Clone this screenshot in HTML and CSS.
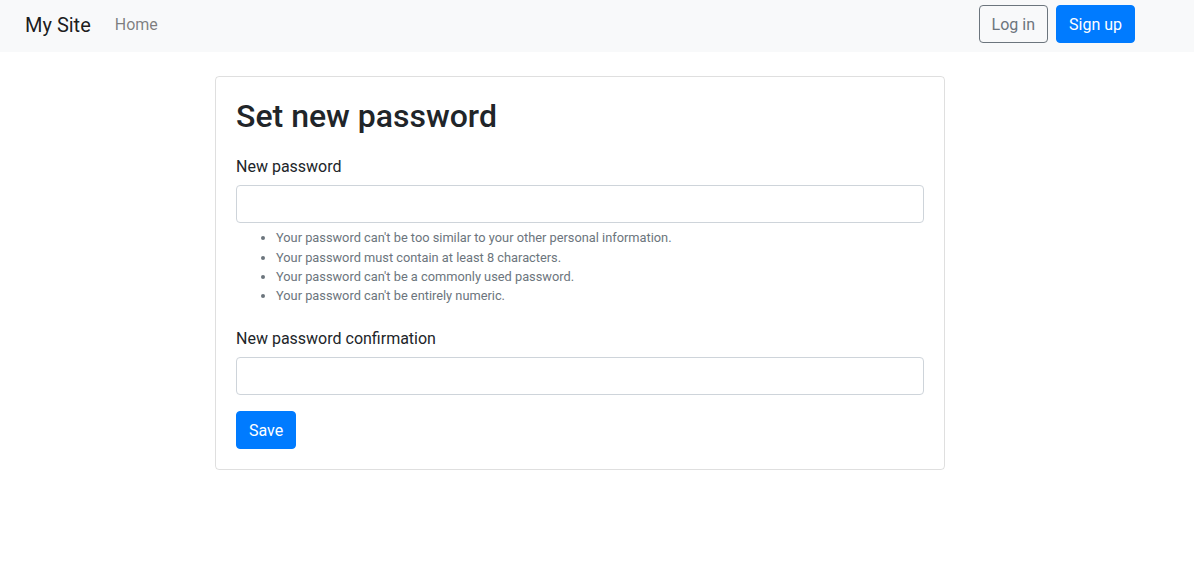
FILE: index.html
```html
<!DOCTYPE html>
<html lang="en">
<head>
<meta charset="utf-8">
<title>Set new password</title>
<link rel="stylesheet" href="styles.css">
</head>
<body>
<nav class="navbar">
  <a class="brand" href="#">My Site</a>
  <a class="nav-link" href="#">Home</a>
  <div class="nav-actions">
    <a class="btn btn-outline" href="#">Log in</a>
    <a class="btn btn-primary" href="#">Sign up</a>
  </div>
</nav>
<main class="main">
  <div class="card">
    <h1 class="title">Set new password</h1>
    <form class="form">
      <div class="form-group">
        <label class="label" for="p1">New password</label>
        <input class="input" id="p1" type="password">
        <ul class="help">
          <li>Your password can't be too similar to your other personal information.</li>
          <li>Your password must contain at least 8 characters.</li>
          <li>Your password can't be a commonly used password.</li>
          <li>Your password can't be entirely numeric.</li>
        </ul>
      </div>
      <div class="form-group">
        <label class="label" for="p2">New password confirmation</label>
        <input class="input" id="p2" type="password">
      </div>
      <button class="btn btn-primary save" type="button">Save</button>
    </form>
  </div>
</main>
</body>
</html>
```
FILE: styles.css
```css
* { box-sizing: border-box; }
html, body { margin: 0; padding: 0; }
body {
  font-family: Roboto, "Liberation Sans", sans-serif;
  font-size: 16px;
  line-height: 1.5;
  color: #212529;
  background: #fff;
}
a { text-decoration: none; }
.navbar {
  display: flex;
  align-items: flex-start;
  height: 52px;
  padding: 5px 59px 0 25px;
  background: #f8f9fa;
}
.brand {
  margin-top: 5px;
  font-size: 20px;
  line-height: 30px;
  color: rgba(0,0,0,.9);
  margin-right: 24px;
}
.nav-link {
  margin-top: 8px;
  color: rgba(0,0,0,.5);
  font-size: 16px;
  line-height: 24px;
}
.nav-actions {
  margin-left: auto;
  display: flex;
  gap: 8px;
}
.btn {
  display: inline-block;
  font-family: inherit;
  font-size: 16px;
  line-height: 24px;
  padding: 7px 12px 5px;
  border: 1px solid transparent;
  border-radius: 4px;
  cursor: pointer;
}
.btn-outline {
  color: #6c757d;
  border-color: #6c757d;
}
.btn-primary {
  color: #fff;
  background: #007bff;
  border-color: #007bff;
}
.main {
  padding: 24px 0 0 215px;
}
.card {
  width: 730px;
  border: 1px solid rgba(0,0,0,.125);
  border-radius: 4px;
  padding: 20px;
}
.title {
  margin: 0 0 20px;
  font-size: 32px;
  font-weight: 500;
  line-height: 1.2;
}
.form { margin: 0; }
.form-group { margin-bottom: 16px; }
.label {
  display: block;
  margin-bottom: 6px;
}
.input {
  display: block;
  width: 100%;
  height: 38px;
  padding: 6px 12px;
  font-family: inherit;
  font-size: 16px;
  border: 1px solid #ced4da;
  border-radius: 4px;
  background: #fff;
}
.help {
  margin: 5px 0 0;
  padding: 0 0 6px 40px;
  font-size: 12.8px;
  line-height: 19.2px;
  color: #6c757d;
}
.save { margin: 0; }
```
